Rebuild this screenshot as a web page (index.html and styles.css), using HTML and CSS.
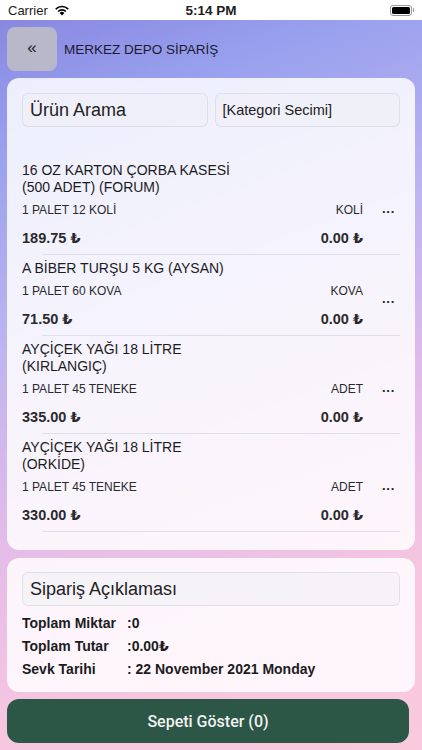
FILE: index.html
```html
<!DOCTYPE html>
<html lang="tr">
<head>
<meta charset="utf-8">
<link rel="stylesheet" href="styles.css">
</head>
<body>
<div class="status">
  <div class="carrier">Carrier
    <svg class="wifi" width="16" height="12" viewBox="0 0 16 12"><path d="M8 11.5 L5.6 8.9 A3.4 3.4 0 0 1 10.4 8.9 Z" fill="#000"/><path d="M3.6 6.9 A6.2 6.2 0 0 1 12.4 6.9 L11.2 8.1 A4.5 4.5 0 0 0 4.8 8.1 Z" fill="#000"/><path d="M1.2 4.5 A9.6 9.6 0 0 1 14.8 4.5 L13.6 5.7 A7.9 7.9 0 0 0 2.4 5.7 Z" fill="#000"/></svg>
  </div>
  <div class="time">5:14 PM</div>
  <div class="battery"><span class="batt-body"><span class="batt-fill"></span></span><span class="batt-tip"></span></div>
</div>
<main class="screen">
  <header class="topbar">
    <button class="back">«</button>
    <h1 class="title">MERKEZ DEPO SİPARİŞ</h1>
  </header>
  <section class="card list-card">
    <div class="filters">
      <div class="field big">Ürün Arama</div>
      <div class="field">[Kategori Secimi]</div>
    </div>
    <div class="items">
      <div class="item">
        <div class="item-main">
          <div class="name">16 OZ KARTON ÇORBA KASESİ<br>(500 ADET) (FORUM)</div>
          <div class="row sub"><span>1 PALET 12 KOLİ</span><span>KOLİ</span></div>
          <div class="row price"><span>189.75 ₺</span><span>0.00 ₺</span></div>
        </div>
        <div class="dots">···</div>
      </div>
      <div class="item">
        <div class="item-main">
          <div class="name">A BİBER TURŞU 5 KG (AYSAN)</div>
          <div class="row sub"><span>1 PALET 60 KOVA</span><span>KOVA</span></div>
          <div class="row price"><span>71.50 ₺</span><span>0.00 ₺</span></div>
        </div>
        <div class="dots">···</div>
      </div>
      <div class="item">
        <div class="item-main">
          <div class="name">AYÇİÇEK YAĞI 18 LİTRE<br>(KIRLANGIÇ)</div>
          <div class="row sub"><span>1 PALET 45 TENEKE</span><span>ADET</span></div>
          <div class="row price"><span>335.00 ₺</span><span>0.00 ₺</span></div>
        </div>
        <div class="dots">···</div>
      </div>
      <div class="item">
        <div class="item-main">
          <div class="name">AYÇİÇEK YAĞI 18 LİTRE<br>(ORKİDE)</div>
          <div class="row sub"><span>1 PALET 45 TENEKE</span><span>ADET</span></div>
          <div class="row price"><span>330.00 ₺</span><span>0.00 ₺</span></div>
        </div>
        <div class="dots">···</div>
      </div>
    </div>
  </section>
  <section class="card summary">
    <div class="field big wide">Sipariş Açıklaması</div>
    <div class="totals">
      <span>Toplam Miktar</span><span>:0</span>
      <span>Toplam Tutar</span><span>:0.00₺</span>
      <span>Sevk Tarihi</span><span>: 22 November 2021 Monday</span>
    </div>
  </section>
  <button class="cart">Sepeti Göster (0)</button>
</main>
</body>
</html>
```
FILE: styles.css
```css
* { box-sizing: border-box; }
html, body { margin: 0; padding: 0; }
body {
  width: 422px;
  height: 750px;
  overflow: hidden;
  font-family: "Liberation Sans", Arial, "DejaVu Sans", sans-serif;
  color: #1c1c1e;
  background: #fff;
}
.status {
  height: 20px;
  background: #fff;
  display: flex;
  align-items: center;
  justify-content: space-between;
  padding: 0 8px;
  font-size: 13px;
  position: relative;
}
.carrier { display: flex; align-items: center; gap: 6px; }
.time {
  position: absolute;
  left: 0; right: 0;
  text-align: center;
  font-weight: bold;
  font-size: 13.5px;
}
.battery { display: flex; align-items: center; gap: 1px; }
.batt-body {
  width: 22px; height: 11px;
  border: 1px solid #999;
  border-radius: 3px;
  padding: 1px;
  display: flex;
}
.batt-fill { flex: 1; background: #000; border-radius: 1.5px; }
.batt-tip { width: 1.5px; height: 4px; background: #999; border-radius: 0 1px 1px 0; }

.screen {
  height: 730px;
  background: linear-gradient(160deg, #8987e0 0%, #98a0ee 14%, #bcb4f0 36%, #e4bce8 60%, #f6c6e0 80%, #f9cadc 100%);
  padding: 7px 7px 0 7px;
  display: flex;
  flex-direction: column;
}
.topbar {
  display: flex;
  align-items: center;
  height: 44px;
  gap: 7px;
}
.back {
  width: 50px; height: 44px;
  border: none;
  border-radius: 8px;
  background: #b9b8ca;
  font-family: inherit;
  font-size: 17px;
  color: #222;
  padding: 0 0 2px 0;
}
.title {
  margin: 0;
  font-size: 13.5px;
  font-weight: normal;
  color: #1b1b2e;
}
.card {
  background: rgba(255,255,255,0.84);
  border-radius: 12px;
  padding: 15px;
}
.list-card { margin-top: 7px; height: 472px; }
.filters { display: flex; gap: 7px; }
.field {
  flex: 1;
  height: 34px;
  border: 1px solid rgba(0,0,0,0.07);
  border-radius: 6px;
  background: rgba(238,238,246,0.55);
  display: flex;
  align-items: center;
  padding: 0 7px;
  font-size: 14.5px;
  color: #222;
}
.field.big { font-size: 18px; }
.items { margin-top: 35px; }
.item {
  display: flex;
  padding: 0 0 7px 0;
  margin-bottom: 6px;
  position: relative;
}
.item:last-child { margin-bottom: 0; }
.item::after {
  content: "";
  position: absolute;
  left: 20px; right: 0; bottom: -1px;
  height: 1px;
  background: #dedfe8;
}
.item-main { flex: 1; }
.name { font-size: 14px; line-height: 17px; color: #1c1c1e; }
.row { display: flex; justify-content: space-between; }
.sub { font-size: 12px; margin-top: 7px; line-height: 14px; color: #2a2a2e; }
.price { font-size: 14.5px; font-weight: bold; margin-top: 13px; line-height: 17px; color: #2a2a2e; }
.dots {
  width: 37px;
  text-align: right;
  padding: 0 5px 0 0;
  align-self: center;
  font-size: 13px;
  font-weight: bold;
  margin-top: 14px;
  color: #222;
}
.summary { margin-top: 8px; padding-top: 14px; padding-bottom: 14px; }
.field.wide { flex: none; width: 100%; }
.totals {
  display: grid;
  grid-template-columns: 105px auto;
  row-gap: 6px;
  margin-top: 9px;
  font-size: 14px;
  font-weight: bold;
  line-height: 17px;
  color: #1c1c1e;
}
.cart {
  margin-top: 7px;
  width: 402px;
  height: 44px;
  border: none;
  border-radius: 12px;
  background: #2c5645;
  color: #f2f2f2;
  font-family: Roboto, "Liberation Sans", sans-serif;
  font-size: 16px;
  font-weight: 500;
}
```
